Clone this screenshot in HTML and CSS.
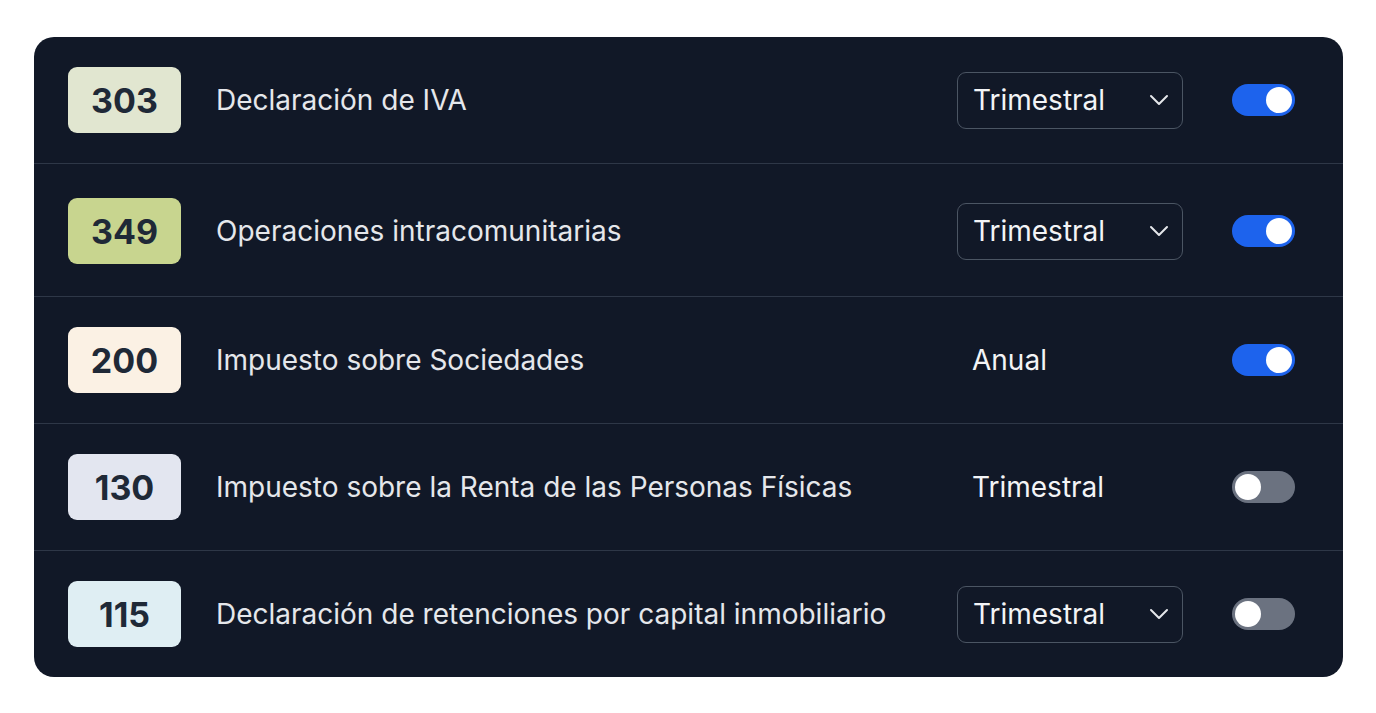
FILE: index.html
```html
<!DOCTYPE html>
<html lang="es">
<head>
    <meta charset="UTF-8">
    <meta name="viewport" content="width=device-width, initial-scale=1.0">
    <title>Modelos fiscales</title>
    <link rel="stylesheet" href="styles.css">
</head>
<body>
    <div class="tarjeta">

        <div class="fila">
            <div class="codigo codigo-303">303</div>
            <div class="nombre">Declaración de IVA</div>
            <button class="periodo periodo-select">
                <span>Trimestral</span>
                <svg class="chevron" viewBox="0 0 24 24" fill="none" stroke="currentColor" stroke-width="2" stroke-linecap="round" stroke-linejoin="round">
                    <polyline points="4 8 12 16 20 8"></polyline>
                </svg>
            </button>
            <div class="interruptor activo"><span class="perilla"></span></div>
        </div>

        <div class="fila fila-alta">
            <div class="codigo codigo-349">349</div>
            <div class="nombre">Operaciones intracomunitarias</div>
            <button class="periodo periodo-select">
                <span>Trimestral</span>
                <svg class="chevron" viewBox="0 0 24 24" fill="none" stroke="currentColor" stroke-width="2" stroke-linecap="round" stroke-linejoin="round">
                    <polyline points="4 8 12 16 20 8"></polyline>
                </svg>
            </button>
            <div class="interruptor activo"><span class="perilla"></span></div>
        </div>

        <div class="fila">
            <div class="codigo codigo-200">200</div>
            <div class="nombre">Impuesto sobre Sociedades</div>
            <div class="periodo">Anual</div>
            <div class="interruptor activo"><span class="perilla"></span></div>
        </div>

        <div class="fila">
            <div class="codigo codigo-130">130</div>
            <div class="nombre">Impuesto sobre la Renta de las Personas Físicas</div>
            <div class="periodo">Trimestral</div>
            <div class="interruptor"><span class="perilla"></span></div>
        </div>

        <div class="fila">
            <div class="codigo codigo-115">115</div>
            <div class="nombre">Declaración de retenciones por capital inmobiliario</div>
            <button class="periodo periodo-select">
                <span>Trimestral</span>
                <svg class="chevron" viewBox="0 0 24 24" fill="none" stroke="currentColor" stroke-width="2" stroke-linecap="round" stroke-linejoin="round">
                    <polyline points="4 8 12 16 20 8"></polyline>
                </svg>
            </button>
            <div class="interruptor"><span class="perilla"></span></div>
        </div>

    </div>
</body>
</html>
```

FILE: styles.css
```css
body {
    margin: 0;
    padding: 37px 33px 37px 34px;
    background-color: #ffffff;
    font-family: Inter, "Noto Sans", sans-serif;
}

.tarjeta {
    background-color: #111827;
    border-radius: 20px;
    overflow: hidden;
}

.fila {
    display: grid;
    grid-template-columns: 113px 1fr 226px 77px;
    column-gap: 35px;
    align-items: center;
    padding: 30px 48px 30px 34px;
    border-bottom: 1px solid #2e3747;
}

.fila:last-child {
    border-bottom: none;
}

.fila-alta {
    padding-top: 34px;
    padding-bottom: 32px;
}

.codigo {
    height: 66px;
    border-radius: 9px;
    display: flex;
    align-items: center;
    justify-content: center;
    font-size: 34px;
    font-weight: 700;
    color: #1f2937;
}

.codigo-303 { background-color: #e1e6d0; }
.codigo-349 { background-color: #c8d58f; }
.codigo-200 { background-color: #fbf1e4; }
.codigo-130 { background-color: #e3e6f0; }
.codigo-115 { background-color: #dfeef3; }

.nombre {
    font-size: 28px;
    color: #e5e7eb;
}

.periodo {
    font-family: Inter, "Noto Sans", sans-serif;
    font-size: 28px;
    color: #f3f4f6;
    padding: 0 11px 0 15px;
}

.periodo-select {
    height: 57px;
    background-color: transparent;
    border: 1.5px solid #4b5563;
    border-radius: 9px;
    display: flex;
    align-items: center;
    justify-content: space-between;
    text-align: left;
}

.chevron {
    width: 24px;
    height: 24px;
    color: #e5e7eb;
}

.interruptor {
    justify-self: end;
    width: 63px;
    height: 32px;
    border-radius: 16px;
    background-color: #6b7280;
    display: flex;
    align-items: center;
    padding: 0 3px;
    box-sizing: border-box;
}

.interruptor.activo {
    background-color: #1d63ed;
    justify-content: flex-end;
}

.perilla {
    width: 26px;
    height: 26px;
    border-radius: 50%;
    background-color: #ffffff;
}
```
